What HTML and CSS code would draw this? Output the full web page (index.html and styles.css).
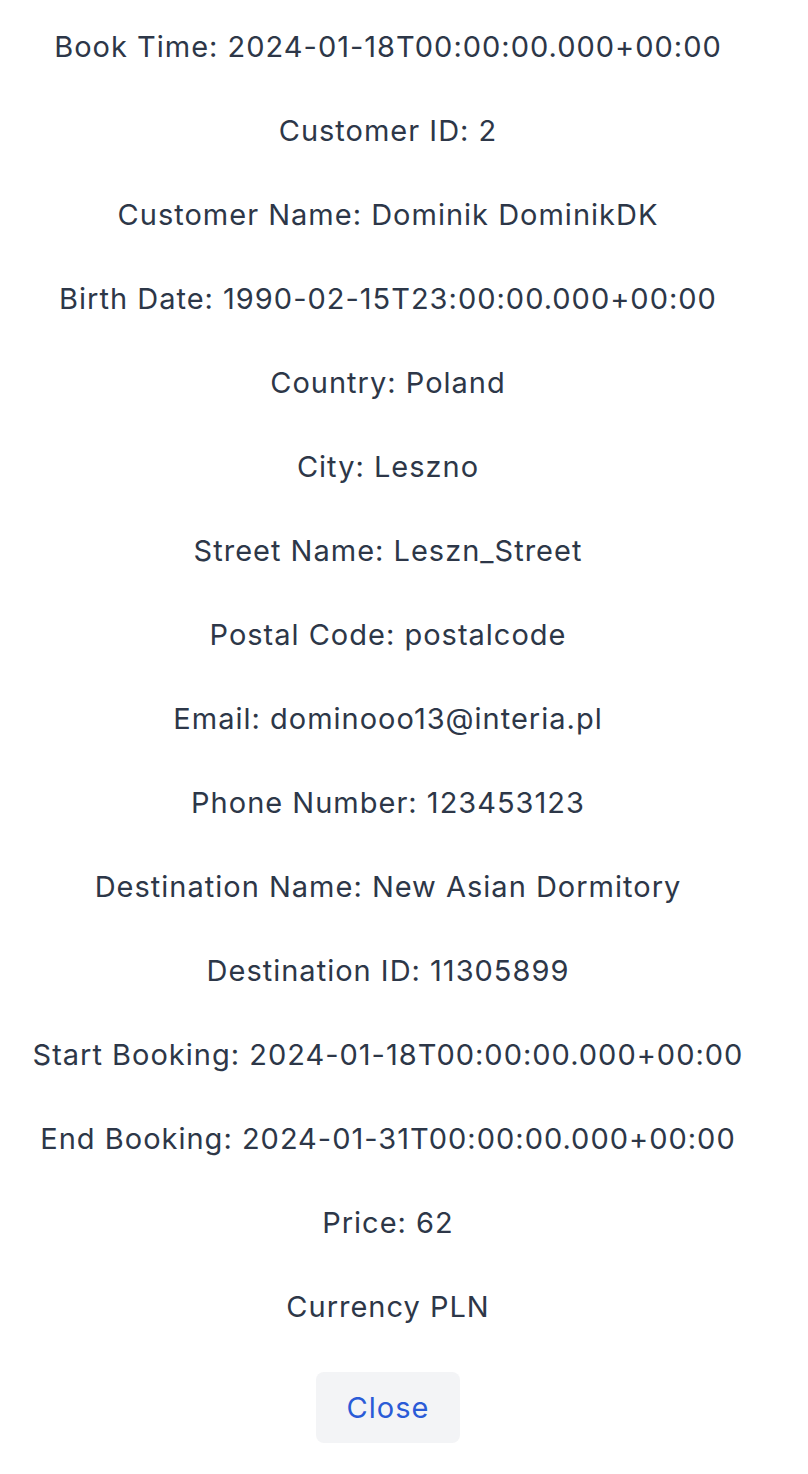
FILE: index.html
```html
<!DOCTYPE html>
<html>
<head>
<meta charset="utf-8">
<link rel="stylesheet" href="styles.css">
</head>
<body>
<div class="details">
  <p class="row">Book Time: 2024-01-18T00:00:00.000+00:00</p>
  <p class="row">Customer ID: 2</p>
  <p class="row">Customer Name: Dominik DominikDK</p>
  <p class="row">Birth Date: 1990-02-15T23:00:00.000+00:00</p>
  <p class="row">Country: Poland</p>
  <p class="row">City: Leszno</p>
  <p class="row">Street Name: Leszn_Street</p>
  <p class="row">Postal Code: postalcode</p>
  <p class="row">Email: dominooo13@interia.pl</p>
  <p class="row">Phone Number: 123453123</p>
  <p class="row">Destination Name: New Asian Dormitory</p>
  <p class="row">Destination ID: 11305899</p>
  <p class="row">Start Booking: 2024-01-18T00:00:00.000+00:00</p>
  <p class="row">End Booking: 2024-01-31T00:00:00.000+00:00</p>
  <p class="row">Price: 62</p>
  <p class="row">Currency PLN</p>
  <button class="close-btn">Close</button>
</div>
</body>
</html>
```
FILE: styles.css
```css
html, body {
  margin: 0;
  padding: 0;
  background: #ffffff;
}
body {
  font-family: Inter, "Noto Sans", sans-serif;
  color: #2d3748;
}
.details {
  display: flex;
  flex-direction: column;
  align-items: center;
  gap: 42px;
  padding-top: 26px;
  padding-right: 32px;
}
.row {
  margin: 0;
  font-size: 29px;
  line-height: 42px;
  letter-spacing: 1px;
  text-align: center;
  white-space: nowrap;
}
.close-btn {
  margin-top: 2px;
  width: 144px;
  height: 71px;
  border: none;
  border-radius: 8px;
  background: #f3f4f6;
  color: #2a5bd7;
  font-family: Inter, "Noto Sans", sans-serif;
  font-size: 29px;
  letter-spacing: 1px;
  cursor: pointer;
}
```
